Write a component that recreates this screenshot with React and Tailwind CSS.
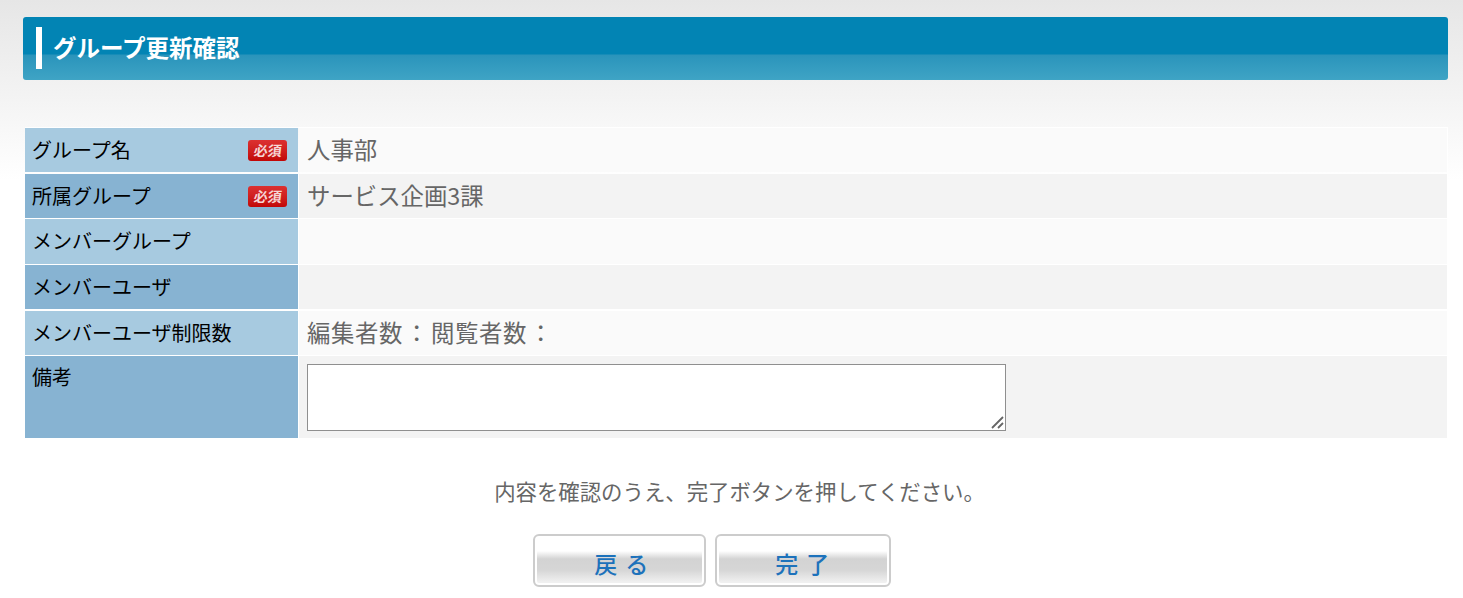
const rows = [
  { label: "グループ名", required: true, value: "人事部", light: true, height: "h-[44px]", gap: "mb-[2px]" },
  { label: "所属グループ", required: true, value: "サービス企画3課", light: false, height: "h-[44px]", gap: "mb-[1px]" },
  { label: "メンバーグループ", value: "", light: true, height: "h-[45px]", gap: "mb-[1px]" },
  { label: "メンバーユーザ", value: "", light: false, height: "h-[44px]", gap: "mb-[2px]" },
  {
    label: "メンバーユーザ制限数",
    value: (
      <span className="tracking-[0.6px]">
        編集者数<span className="px-[2px]">：</span>閲覧者数<span className="px-[2px]">：</span>
      </span>
    ),
    light: true,
    height: "h-[44px]",
    gap: "mb-[1px]",
  },
];

function RequiredBadge() {
  return (
    <span className="flex h-[21px] w-[39px] items-center justify-center rounded-[3px] bg-gradient-to-b from-[#dc3030] to-[#c20606]">
      <span className="inline-block skew-x-[-6deg] text-[14px] leading-none font-bold text-[#f6d6d6]">必須</span>
    </span>
  );
}

function Row({ label, required, value, light, height, gap }) {
  return (
    <div className={`flex ${height} ${gap}`}>
      <div className={`flex w-[273px] items-center justify-between pr-[11px] pl-[7px] text-[20px] text-black ${light ? "bg-[#a7cae0]" : "bg-[#87b3d2]"}`}>
        <span className="-mt-[1px]">{label}</span>
        {required && <RequiredBadge />}
      </div>
      <div className={`ml-px flex flex-1 items-center pb-[1px] pl-[8px] text-[23.4px] text-[#666] ${light ? "bg-[#fafafa]" : "bg-[#f3f3f3]"}`}>
        {value}
      </div>
    </div>
  );
}

function ActionButton({ children, className }) {
  return (
    <button
      type="button"
      className={`flex h-[53px] ${className} items-end justify-center rounded-[6px] border-2 border-[#cccccc] bg-[linear-gradient(to_bottom,#ffffff_0,#ffffff_15px,#d3d3d3_23px,#d6d6d6_34px,#f0f0f0_46px)] pb-[6px] text-[23px] leading-[32px] font-medium tracking-[1.5px] text-[#1d72bb] shadow-[inset_0_0_0_2px_#ffffff]`}
    >
      {children}
    </button>
  );
}

export default function App() {
  return (
    <div className="h-[598px] overflow-hidden bg-[linear-gradient(to_bottom,#e6e6e6_0,#ffffff_180px)] pt-[17px] pr-[15px] pl-[23px] font-['Noto_Sans_CJK_JP',sans-serif]">
      <div className="flex h-[63px] items-center rounded-[3px] bg-[linear-gradient(to_bottom,#0284b4_0,#0284b4_37px,#2a94bb_38px,#3fa4c5_63px)] pb-[2px] pl-[13px]">
        <div className="h-[42px] w-[6px] bg-white" />
        <h1 className="ml-[11px] text-[23.5px] font-bold text-white">グループ更新確認</h1>
      </div>

      <div className="mt-[47px] ml-[2px] w-[1423px] border-t-[1px] border-r-[1px] border-white">
        {rows.map((row) => (
          <Row key={row.label} {...row} />
        ))}
        <div className="flex h-[82px]">
          <div className="w-[273px] bg-[#87b3d2] pt-[6px] pl-[7px] text-[20px] text-black">備考</div>
          <div className="ml-px flex-1 bg-[#f3f3f3] pt-[8px] pl-[8px]">
            <div className="relative h-[67px] w-[699px]">
              <textarea className="block h-full w-full resize-none border border-[#8f8f8f] bg-white" readOnly />
              {/* larger resize grip than the headless browser draws */}
              <svg className="absolute right-[2px] bottom-[2px] h-[13px] w-[13px]" viewBox="0 0 13 13">
                <path d="M1 12L12 1M7 12L12 7" stroke="#666666" strokeWidth="1.8" fill="none" />
              </svg>
            </div>
          </div>
        </div>
      </div>

      <p className="mt-[37px] pl-[8px] text-center text-[21.4px] leading-[32px] text-[#666]">
        内容を確認のうえ、完了ボタンを押してください。
      </p>

      <div className="mt-[27px] ml-[510px] flex gap-[9px]">
        <ActionButton className="w-[173px] pl-[5px]">戻 る</ActionButton>
        <ActionButton className="w-[176px]">完 了</ActionButton>
      </div>
    </div>
  );
}
